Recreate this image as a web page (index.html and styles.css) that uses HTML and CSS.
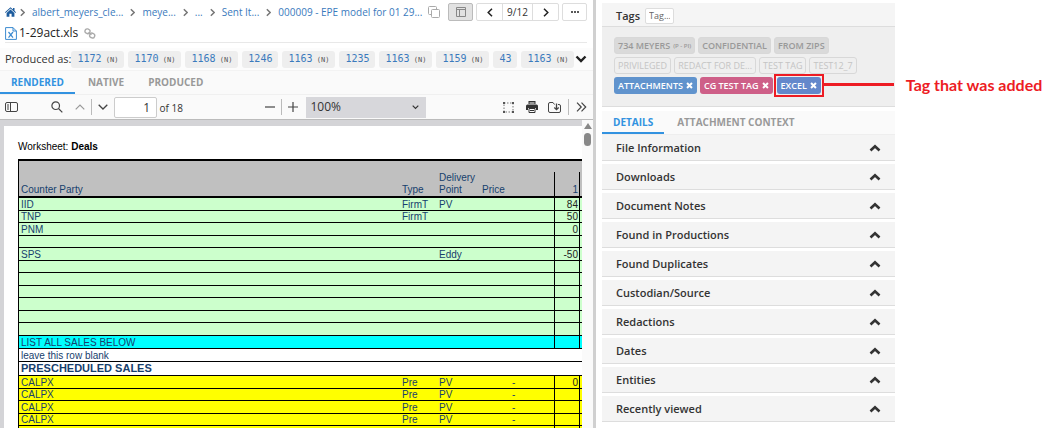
FILE: index.html
```html
<!DOCTYPE html>
<html lang="en">
<head>
  <meta charset="UTF-8">
  <meta name="viewport" content="width=device-width, initial-scale=1.0">
  <title>1-29act.xls</title>
  <link rel="stylesheet" href="styles.css">
</head>
<body>

  <!-- shared icons -->
  <svg class="icon-defs" aria-hidden="true">
    <symbol id="sep" viewBox="0 0 6 10"><path d="M1 1l4 4-4 4" fill="none" stroke="#777" stroke-width="1.800"/></symbol>
    <symbol id="up" viewBox="0 0 12 8"><path d="M1.500 6.500L6 2.200l4.500 4.300" fill="none" stroke="#333" stroke-width="2.600"/></symbol>
    <symbol id="x" viewBox="0 0 8 8"><path d="M1.200 1.200l5.600 5.600M6.800 1.200L1.200 6.800" fill="none" stroke="#fff" stroke-width="2.300"/></symbol>
  </svg>

  <div class="layout">
    <main class="viewer">
      <div class="topbar">
        <nav class="breadcrumb" aria-label="Breadcrumb">
          <a class="home" href="#" aria-label="Home"><svg width="11" height="10" viewBox="0 0 11 10"><path d="M5.500 .3L8 2.500V1h1.500v2.800L11 5.200l-.6.7-4.900-4.300L.6 5.900 0 5.200z" fill="#1d5c9e"/><path d="M5.500 2.500L9.400 6v3.700H6.600V6.800H4.400v2.900H1.600V6z" fill="#1d5c9e"/></svg></a>
          <svg class="sep"><use href="#sep"/></svg>
          <a href="#">albert_meyers_cle...</a>
          <svg class="sep"><use href="#sep"/></svg>
          <a href="#">meye...</a>
          <svg class="sep"><use href="#sep"/></svg>
          <a href="#">...</a>
          <svg class="sep"><use href="#sep"/></svg>
          <a href="#">Sent It...</a>
          <svg class="sep"><use href="#sep"/></svg>
          <a href="#">000009 - EPE model for 01 29...</a>
        </nav>
        <button class="copy" aria-label="Copy path"><svg width="12" height="12" viewBox="0 0 12 12" fill="none" stroke="#aaa"><path d="M3 8.500H1.500a1 1 0 0 1-1-1v-6a1 1 0 0 1 1-1h6a1 1 0 0 1 1 1V3"/><rect x="3.500" y="3.500" width="8" height="8" rx="1"/></svg></button>
        <div class="top-actions">
          <button class="btn pressed" aria-label="Layout"><svg width="10" height="10" viewBox="0 0 10 10" fill="none" stroke="#888"><path d="M.5.5h9v9h-9zM.5 2.500h9M3.500 2.500v7"/></svg></button>
          <div class="pager">
            <button aria-label="Previous"><svg width="6" height="9" viewBox="0 0 6 9"><path d="M5 .7L1.200 4.500 5 8.300" fill="none" stroke="#222" stroke-width="1.500"/></svg></button>
            <span>9/12</span>
            <button aria-label="Next"><svg width="6" height="9" viewBox="0 0 6 9"><path d="M1 .7l3.800 3.800L1 8.300" fill="none" stroke="#222" stroke-width="1.500"/></svg></button>
          </div>
          <button class="btn" aria-label="More"><svg width="8" height="2" viewBox="0 0 8 2" fill="#222"><circle cx="1" cy="1" r="1"/><circle cx="4" cy="1" r="1"/><circle cx="7" cy="1" r="1"/></svg></button>
        </div>
      </div>

      <div class="file-name">
        <svg width="12" height="13" viewBox="0 0 12 13" fill="none" stroke="#3b8ad0"><path d="M.6.6h7.400l3.400 3.400v8.400H.6zM8 .6V4h3.400"/><path d="M3.500 5l4.500 5.600M8 5l-4.500 5.600" stroke-width="1.200"/></svg>
        <h1>1-29act.xls</h1>
        <a href="#" aria-label="Link"><svg width="12" height="11" viewBox="0 0 12 11" fill="none" stroke="#aaa" stroke-width="1.400"><rect x="1" y="1" width="5" height="4.500" rx="2" transform="rotate(20 3.500 3.200)"/><rect x="5.700" y="5.300" width="5" height="4.500" rx="2" transform="rotate(20 8.200 7.500)"/><path d="M4.500 4.300l3 2.500"/></svg></a>
      </div>

      <div class="produced">
        <span>Produced as:</span>
        <div class="chips">
          <a href="#">1172<small> (N)</small></a>
          <a href="#">1170<small> (N)</small></a>
          <a href="#">1168<small> (N)</small></a>
          <a href="#">1246</a>
          <a href="#">1163<small> (N)</small></a>
          <a href="#">1235</a>
          <a href="#">1163<small> (N)</small></a>
          <a href="#">1159<small> (N)</small></a>
          <a href="#">43</a>
          <a href="#">1163<small> (N)</small></a>
        </div>
        <button aria-label="Show all"><svg width="12" height="8" viewBox="0 0 12 8"><path d="M1.500 1.500L6 6l4.500-4.500" fill="none" stroke="#222" stroke-width="2.400"/></svg></button>
      </div>

      <div class="tabs view-tabs">
        <button class="active">RENDERED</button>
        <button>NATIVE</button>
        <button>PRODUCED</button>
      </div>

      <div class="toolbar">
        <div class="tools">
          <button class="sidebar-toggle" aria-label="Sidebar"><svg width="13" height="10" viewBox="0 0 13 10" fill="none" stroke="#444"><rect x=".5" y=".5" width="12" height="9" rx="1.500"/><path d="M5.500.5v9M2 3h2M2 5h2M2 7h2"/></svg></button>
          <button aria-label="Find"><svg width="12" height="12" viewBox="0 0 12 12" fill="none" stroke="#444" stroke-width="1.200"><circle cx="4.700" cy="4.700" r="3.800"/><path d="M7.500 7.500l3.800 3.800"/></svg></button>
          <div class="page-step">
            <button aria-label="Previous page"><svg width="10" height="6" viewBox="0 0 10 6"><path d="M.7 5.300L5 1l4.300 4.300" fill="none" stroke="#999" stroke-width="1.200"/></svg></button>
            <i></i>
            <button aria-label="Next page"><svg width="10" height="6" viewBox="0 0 10 6"><path d="M.7.7L5 5 9.300.7" fill="none" stroke="#444" stroke-width="1.300"/></svg></button>
          </div>
          <label class="page-number"><input type="text" value="1" aria-label="Page"> of 18</label>
        </div>
        <div class="tools zoom">
          <button aria-label="Zoom out"><svg width="10" height="10" viewBox="0 0 10 10"><path d="M0 5h10" stroke="#444" stroke-width="1.200"/></svg></button>
          <i></i>
          <button aria-label="Zoom in"><svg width="10" height="10" viewBox="0 0 10 10"><path d="M0 5h10M5 0v10" stroke="#444" stroke-width="1.200"/></svg></button>
          <select aria-label="Zoom">
            <option>100%</option>
          </select>
        </div>
        <div class="tools end">
          <button aria-label="Select area"><svg width="11" height="11" viewBox="0 0 11 11"><rect x="1" y="1" width="9" height="9" fill="none" stroke="#777" stroke-dasharray="1.500 1.500"/><path d="M0 0h2v2H0zM9 0h2v2H9zM0 9h2v2H0zM9 9h2v2H9z" fill="#555"/></svg></button>
          <button aria-label="Print"><svg width="12" height="12" viewBox="0 0 12 12"><path d="M2.500 0h7v3h-7zM1.500 3.500h9A1.500 1.500 0 0 1 12 5v4h-2V7H2v2H0V5a1.500 1.500 0 0 1 1.500-1.500z" fill="#333"/><path d="M3 7.500h6v4H3z" fill="#fff" stroke="#333"/><path d="M4 9.500h4" stroke="#333"/><path d="M3.500 1h5v2h-5z" fill="#999"/></svg></button>
          <button aria-label="Download"><svg width="13" height="11" viewBox="0 0 13 11" fill="none" stroke="#444"><path d="M6.500 2.500L5 .5H2A1.500 1.500 0 0 0 .5 2v7A1.500 1.500 0 0 0 2 10.500h9A1.500 1.500 0 0 0 12.500 9V4A1.500 1.500 0 0 0 11 2.500h-1"/><path d="M8.500 1.500v6M6.300 5.500l2.200 2.200 2.200-2.200" stroke-width="1.300"/></svg></button>
          <i></i>
          <button aria-label="More tools"><svg width="11" height="10" viewBox="0 0 11 10"><path d="M1 .7L5.200 5 1 9.300M5.500.7L9.700 5 5.500 9.300" fill="none" stroke="#444" stroke-width="1.200"/></svg></button>
        </div>
      </div>

      <div class="document">
        <div class="page">
          <p class="worksheet">Worksheet: <b>Deals</b></p>
          <table class="sheet">
            <colgroup>
              <col><col class="c-type"><col class="c-point"><col class="c-price"><col class="c-num"><col class="c-edge">
            </colgroup>
            <thead>
              <tr class="gap"><td colspan="6"></td></tr>
              <tr>
                <th>Counter Party</th>
                <th>Type</th>
                <th>Delivery<br>Point</th>
                <th>Price</th>
                <th class="num">1</th>
                <th></th>
              </tr>
            </thead>
            <tbody class="green">
              <tr><td>IID</td><td>FirmT</td><td>PV</td><td></td><td class="num">84</td><td></td></tr>
              <tr><td>TNP</td><td>FirmT</td><td></td><td></td><td class="num">50</td><td></td></tr>
              <tr><td>PNM</td><td></td><td></td><td></td><td class="num">0</td><td></td></tr>
              <tr><td></td><td></td><td></td><td></td><td class="num"></td><td></td></tr>
              <tr><td>SPS</td><td></td><td>Eddy</td><td></td><td class="num">-50</td><td></td></tr>
              <tr><td></td><td></td><td></td><td></td><td class="num"></td><td></td></tr>
              <tr><td></td><td></td><td></td><td></td><td class="num"></td><td></td></tr>
              <tr><td></td><td></td><td></td><td></td><td class="num"></td><td></td></tr>
              <tr><td></td><td></td><td></td><td></td><td class="num"></td><td></td></tr>
              <tr><td></td><td></td><td></td><td></td><td class="num"></td><td></td></tr>
              <tr><td></td><td></td><td></td><td></td><td class="num"></td><td></td></tr>
            </tbody>
            <tbody class="cyan">
              <tr><td colspan="4">LIST ALL SALES BELOW</td><td class="num"></td><td></td></tr>
            </tbody>
            <tbody class="plain">
              <tr><td colspan="6">leave this row blank</td></tr>
              <tr class="title"><td colspan="6">PRESCHEDULED SALES</td></tr>
            </tbody>
            <tbody class="yellow">
              <tr><td>CALPX</td><td>Pre</td><td>PV</td><td class="dash">-</td><td class="num">0</td><td></td></tr>
              <tr><td>CALPX</td><td>Pre</td><td>PV</td><td class="dash">-</td><td class="num"></td><td></td></tr>
              <tr><td>CALPX</td><td>Pre</td><td>PV</td><td class="dash">-</td><td class="num"></td><td></td></tr>
              <tr><td>CALPX</td><td>Pre</td><td>PV</td><td class="dash">-</td><td class="num"></td><td></td></tr>
              <tr><td></td><td></td><td></td><td></td><td class="num"></td><td></td></tr>
            </tbody>
          </table>
        </div>
        <div class="scrollbar">
          <svg width="8" height="6" viewBox="0 0 8 6"><path d="M4 0l4 6H0z" fill="#888"/></svg>
          <span></span>
        </div>
      </div>
    </main>

    <aside class="side">
      <section class="tags-panel">
        <div class="tags-head">
          <h2>Tags</h2>
          <input type="text" placeholder="Tag..." aria-label="Add tag">
        </div>
        <div class="tags-body">
          <div class="tag-row">
            <span class="tag solid">734 MEYERS<small>(P - PI)</small></span>
            <span class="tag solid">CONFIDENTIAL</span>
            <span class="tag solid">FROM ZIPS</span>
          </div>
          <div class="tag-row">
            <span class="tag">PRIVILEGED</span>
            <span class="tag">REDACT FOR DE...</span>
            <span class="tag">TEST TAG</span>
            <span class="tag">TEST12_7</span>
          </div>
          <div class="tag-row">
            <span class="tag blue">ATTACHMENTS <button aria-label="Remove ATTACHMENTS"><svg><use href="#x"/></svg></button></span>
            <span class="tag pink">CG TEST TAG <button aria-label="Remove CG TEST TAG"><svg><use href="#x"/></svg></button></span>
            <span class="tag indigo marked">EXCEL <button aria-label="Remove EXCEL"><svg><use href="#x"/></svg></button>
              <span class="callout"><i></i>Tag that was added</span>
            </span>
          </div>
        </div>
      </section>

      <div class="tabs detail-tabs">
        <button class="active">DETAILS</button>
        <button>ATTACHMENT CONTEXT</button>
      </div>

      <div class="accordion">
        <button>File Information <svg><use href="#up"/></svg></button>
        <button>Downloads <svg><use href="#up"/></svg></button>
        <button>Document Notes <svg><use href="#up"/></svg></button>
        <button>Found in Productions <svg><use href="#up"/></svg></button>
        <button>Found Duplicates <svg><use href="#up"/></svg></button>
        <button>Custodian/Source <svg><use href="#up"/></svg></button>
        <button>Redactions <svg><use href="#up"/></svg></button>
        <button>Dates <svg><use href="#up"/></svg></button>
        <button>Entities <svg><use href="#up"/></svg></button>
        <button>Recently viewed <svg><use href="#up"/></svg></button>
      </div>
    </aside>
  </div>

</body>
</html>
```
FILE: styles.css
```css
:root {
  --link: #3a7abd;
  --accent: #3292e0;
  --red: #ed1c24;
  --line: #ddd;
}

* {
  margin: 0;
  padding: 0;
  box-sizing: border-box;
}

body {
  font-family: "Open Sans", "Noto Sans", sans-serif;
  font-size: 11px;
  line-height: 16px;
  color: #333;
  background: #fff;
}

button,
input,
select {
  font: inherit;
  color: inherit;
}

button {
  background: none;
  border: none;
  display: flex;
  align-items: center;
  justify-content: center;
  cursor: pointer;
}

a {
  color: var(--link);
  text-decoration: none;
}

svg {
  display: block;
  flex: none;
}

.icon-defs {
  display: none;
}

.layout {
  display: grid;
  grid-template-columns: 596fr 299fr 157fr;
  height: 100vh;
  overflow: hidden;
}

/* left side */
.viewer {
  display: flex;
  flex-direction: column;
  min-width: 0;
  min-height: 0;
  border-right: 3px solid #d0d0d0;
}

.topbar {
  display: flex;
  align-items: center;
  height: 24px;
  padding: 0 6px 0 5px;
}

.breadcrumb {
  display: flex;
  align-items: center;
  gap: 7px;
  font-size: 10px;
  white-space: nowrap;
}

.home {
  margin-right: -3px;
}

.sep {
  width: 5px;
  height: 9px;
}

.copy {
  margin-left: 6px;
}

.top-actions {
  display: flex;
  gap: 3px;
  margin-left: auto;
}

.btn,
.pager {
  height: 18px;
  border: 1px solid var(--line);
  border-radius: 2px;
}

.btn {
  width: 25px;
}

.pressed {
  background: #e2e2e2;
  border-color: #bbb;
}

.pager {
  display: flex;
  align-items: center;
}

.pager button {
  width: 25px;
  height: 16px;
}

.pager span {
  width: 31px;
  text-align: center;
  font-size: 10px;
  border: solid var(--line);
  border-width: 0 1px;
}

.file-name {
  display: flex;
  align-items: center;
  gap: 2px;
  height: 19px;
  margin: 0 6px 5px 5px;
  border-bottom: 1px solid #e8e8e8;
}

.file-name h1 {
  font-size: 12px;
  font-weight: 500;
  color: #222;
}

.file-name a {
  margin-left: 4px;
}

.produced {
  display: flex;
  align-items: center;
  height: 22px;
  padding: 0 6px 0 5px;
  background: #fcfcfc;
  white-space: nowrap;
}

.chips {
  display: flex;
  gap: 4px;
}

.chips a {
  padding: 0 6px;
  border-radius: 3px;
  background: #eee;
  font-family: "DejaVu Sans Mono", monospace;
  font-size: 10px;
}

.chips small {
  font-size: 7px;
  color: #555;
}

.produced button {
  margin-left: auto;
}

.tabs {
  display: flex;
  gap: 2px;
  background: #fafafa;
}

.tabs button {
  padding: 0 11px;
  font-size: 10px;
  font-weight: bold;
  color: #999;
  border-bottom: 2px solid transparent;
}

.tabs .active {
  color: var(--accent);
  border-color: var(--accent);
}

.view-tabs {
  height: 25px;
  border-top: 1px solid #f3f3f3;
  border-bottom: 1px solid #f0f0f0;
}

.toolbar {
  display: flex;
  align-items: center;
  height: 25px;
  padding: 0 6px 0 5px;
  background: #fafafa;
  border-bottom: 1px solid #bbb;
}

.tools {
  display: flex;
  align-items: center;
}

.tools i {
  width: 1px;
  height: 16px;
  background: #bbb;
}

.sidebar-toggle {
  margin-right: 33px;
}

.page-step {
  display: flex;
  align-items: center;
  gap: 6px;
  margin: 0 6px 0 12px;
}

.page-number {
  font-size: 10px;
  white-space: nowrap;
}

.page-number input {
  width: 43px;
  height: 21px;
  padding: 0 6px;
  border: 1px solid #ccc;
  border-radius: 2px;
  background: #fff;
  font-size: 12px;
  text-align: right;
}

.zoom {
  gap: 6px;
  margin: 0 auto;
  padding-left: 4px;
}

.zoom select {
  width: 120px;
  height: 21px;
  margin-left: 2px;
  padding: 0 5px;
  border: none;
  border-radius: 0;
  appearance: none;
  background: #d7d7db url("data:image/svg+xml,%3Csvg xmlns='http://www.w3.org/2000/svg' width='7' height='5'%3E%3Cpath d='M.7.7l2.800 2.800L6.300.7' fill='none' stroke='%23333' stroke-width='1.200'/%3E%3C/svg%3E") no-repeat right 7px center;
  font-size: 12px;
}

.end {
  gap: 10px;
}

.end button:first-child {
  margin-right: 2px;
}

.end i {
  margin: 0 -3px;
}

.document {
  display: flex;
  flex: 1;
  min-height: 0;
  padding: 0 0 0 4px;
  background: #d4d4d7;
}

.page {
  flex: 1;
  min-width: 0;
  margin-top: 6px;
  padding: 13px 0 0 14px;
  background: #fff;
  overflow: hidden;
  font-family: "Liberation Sans", Arial, sans-serif;
  font-size: 10px;
}

.worksheet {
  margin-bottom: 4px;
  color: #000;
}

.sheet {
  width: 100%;
  table-layout: fixed;
  border-collapse: separate;
  border-spacing: 0;
  border-left: 1px solid #000;
  line-height: 11px;
  color: #17406d;
}

.c-type { width: 37px; }
.c-point { width: 43px; }
.c-price { width: 74px; }
.c-num { width: 26px; }
.c-edge { width: 2px; }

.sheet td,
.sheet th {
  padding: 0 0 0 2px;
  text-align: left;
  font-weight: normal;
  white-space: nowrap;
}

.sheet td:last-child:not([colspan]),
.sheet th:last-child {
  padding: 0;
}

.sheet thead {
  background: #c0c0c0;
}

.sheet .gap td {
  height: 13px;
  border-top: 2px solid #000;
}

.sheet th {
  height: 26px;
  line-height: 12px;
  vertical-align: bottom;
  border-bottom: 2px solid #000;
}

.sheet .num {
  padding: 0 1px 0 0;
  text-align: right;
  border-left: 1px solid #000;
  border-right: 1px solid #000;
}

.sheet td.num {
  color: #222;
}

.sheet tbody td {
  height: 13px;
  border-bottom: 1px solid #000;
}

.sheet tbody tr:nth-child(even) td {
  height: 12px;
}

.sheet tbody tr.title:nth-child(even) td {
  height: 14px;
  font-size: 11px;
  font-weight: bold;
}

.green { background: #ccffcc; }
.cyan { background: #00ffff; }
.yellow { background: #ffff00; }

.sheet .dash {
  padding-left: 32px;
}

.scrollbar {
  display: flex;
  flex-direction: column;
  align-items: center;
  gap: 4px;
  width: 11px;
  padding-top: 3px;
  background: #fafafa;
}

.scrollbar span {
  width: 7px;
  height: 13px;
  border-radius: 4px;
  background: #888;
}

/* right side */
.side {
  padding: 3px 0 0 6px;
  min-width: 0;
}

.tags-panel {
  margin-bottom: 4px;
  background: #efefef;
  border-bottom: 1px solid var(--line);
}

.tags-head {
  display: flex;
  align-items: center;
  gap: 5px;
  height: 24px;
  padding: 2px 14px 0;
  background: #f5f5f5;
  border-bottom: 1px solid var(--line);
}

.tags-head h2 {
  font-size: 11px;
  font-weight: 600;
}

.tags-head input {
  width: 29px;
  height: 16px;
  padding: 0 3px;
  border: 1px solid var(--line);
  border-radius: 2px;
  background: #fff;
  font-size: 9px;
}

.tags-head input::placeholder {
  color: #666;
}

.tags-body {
  display: flex;
  flex-direction: column;
  gap: 3px;
  padding: 10px 12px 12px;
}

.tag-row {
  display: flex;
  gap: 3px;
}

.tag {
  display: flex;
  align-items: center;
  gap: 3px;
  height: 17px;
  padding: 0 3px;
  border: 1px solid #d8d8d8;
  border-radius: 3px;
  font-size: 9px;
  color: #c4c4c4;
  white-space: nowrap;
}

.tag small {
  font-size: 6px;
}

.tag svg {
  width: 7px;
  height: 7px;
}

.solid {
  background: #dadada;
  color: #999;
  font-weight: 600;
}

.blue,
.pink,
.indigo {
  border: none;
  padding: 0 4px;
  color: #fff;
  font-weight: 600;
}

.blue { background: #6093cd; }
.pink { background: #ce5f88; }
.indigo { background: #6488cb; }

.marked {
  position: relative;
  margin-left: 1px;
}

.marked::before {
  content: "";
  position: absolute;
  inset: -3px;
  border: 2px solid var(--red);
  pointer-events: none;
}

.callout {
  position: absolute;
  left: 100%;
  top: 0;
  display: flex;
  align-items: center;
  gap: 12px;
  height: 15px;
  margin-left: 3px;
  font-family: Lato, sans-serif;
  font-size: 16px;
  font-weight: bold;
  color: var(--red);
}

.callout i {
  width: 70px;
  height: 3px;
  background: var(--red);
}

.detail-tabs {
  height: 24px;
  border-bottom: 1px solid #eee;
}

.accordion {
  display: flex;
  flex-direction: column;
  gap: 3px;
}

.accordion button {
  justify-content: space-between;
  height: 26px;
  padding: 0 14px;
  background: #f4f4f4;
  border-bottom: 1px solid var(--line);
  font-weight: 600;
}

.accordion svg {
  width: 12px;
  height: 8px;
}
```
